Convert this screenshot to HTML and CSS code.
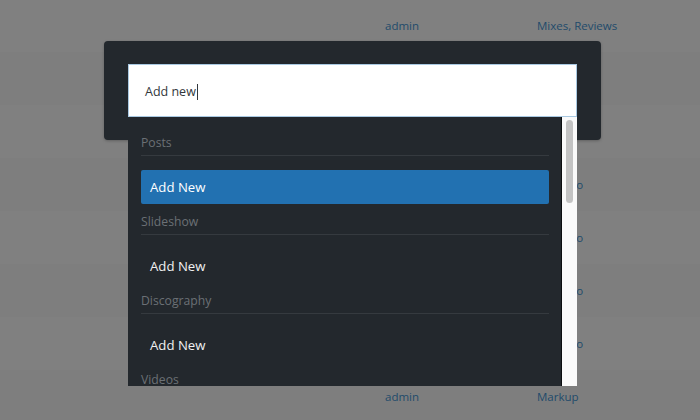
FILE: index.html
```html
<!DOCTYPE html>
<html lang="en">
<head>
<meta charset="utf-8">
<title>Quick search</title>
<link rel="stylesheet" href="styles.css">
</head>
<body>
<div class="table">
  <div class="row"><span></span><a class="link">admin</a><a class="link">Mixes, Reviews</a></div>
  <div class="row alt"><span></span><a class="link">admin</a><a class="link">Mixes</a></div>
  <div class="row"><span></span><a class="link">admin</a><a class="link">Reviews</a></div>
  <div class="row alt"><span></span><a class="link">admin</a><a class="link">Portfolio</a></div>
  <div class="row"><span></span><a class="link">admin</a><a class="link">Portfolio</a></div>
  <div class="row alt"><span></span><a class="link">admin</a><a class="link">Portfolio</a></div>
  <div class="row"><span></span><a class="link">admin</a><a class="link">Portfolio</a></div>
  <div class="row alt"><span></span><a class="link">admin</a><a class="link">Markup</a></div>
</div>

<div class="panel">
  <div class="search">
    <span class="search-text">Add new</span><span class="caret"></span>
  </div>
  <div class="dropdown">
    <div class="list">
      <div class="group">Posts</div>
      <div class="item active">Add New</div>
      <div class="group">Slideshow</div>
      <div class="item">Add New</div>
      <div class="group">Discography</div>
      <div class="item">Add New</div>
      <div class="group">Videos</div>
    </div>
    <div class="track"><div class="thumb"></div></div>
  </div>
</div>
</body>
</html>
```
FILE: styles.css
```css
html, body {
  margin: 0;
  padding: 0;
}
body {
  width: 700px;
  height: 420px;
  overflow: hidden;
  background: #808080;
  font-family: "Open Sans", "Noto Sans", sans-serif;
  position: relative;
}
.table {
  margin-top: -1px;
}
.row {
  display: grid;
  grid-template-columns: 385px 152px 1fr;
  height: 53px;
  line-height: 53px;
  font-size: 11.5px;
  background: #808080;
}
.row.alt {
  background: #7e7e7e;
}
.link {
  color: #1f4b6b;
  white-space: nowrap;
}
.panel {
  position: absolute;
  left: 104px;
  top: 41px;
  width: 449px;
  padding: 23px 24px 23px 24px;
  background: #23282d;
  border-radius: 4px;
  box-shadow: 0 1px 3px rgba(0,0,0,0.25);
}
.search {
  background: #fff;
  border: 1px solid #a9c9e2;
  display: flex;
  align-items: center;
  padding-left: 16px;
  padding-top: 2px;
  box-sizing: border-box;
  height: 53px;
}
.search-text {
  font-size: 12.5px;
  color: #32373c;
}
.caret {
  display: inline-block;
  width: 1px;
  height: 16px;
  background: #32373c;
  margin-left: 1px;
}
.dropdown {
  position: absolute;
  left: 24px;
  top: 76px;
  width: 449px;
  height: 269px;
  display: flex;
  background: #23282d;
  overflow: hidden;
}
.list {
  flex: 1;
  padding: 8px 12px 0 13px;
  border-right: 1px solid #0c0e10;
}
.group {
  font-size: 12.2px;
  line-height: 18px;
  padding: 9px 0 3px;
  color: #6b7075;
  border-bottom: 1px solid #353a3f;
}
.item {
  margin-top: 14px;
  height: 34px;
  line-height: 34px;
  padding-left: 9px;
  font-size: 13.2px;
  color: #f1f1f1;
  border-radius: 2px;
}
.item.active {
  background: #2271b1;
  color: #fff;
}
.track {
  width: 15px;
  background: #fafafa;
  padding: 3px 4px 0 4px;
  box-sizing: border-box;
}
.thumb {
  width: 7px;
  height: 83px;
  background: #c3c3c3;
  border-radius: 4px;
}
```
